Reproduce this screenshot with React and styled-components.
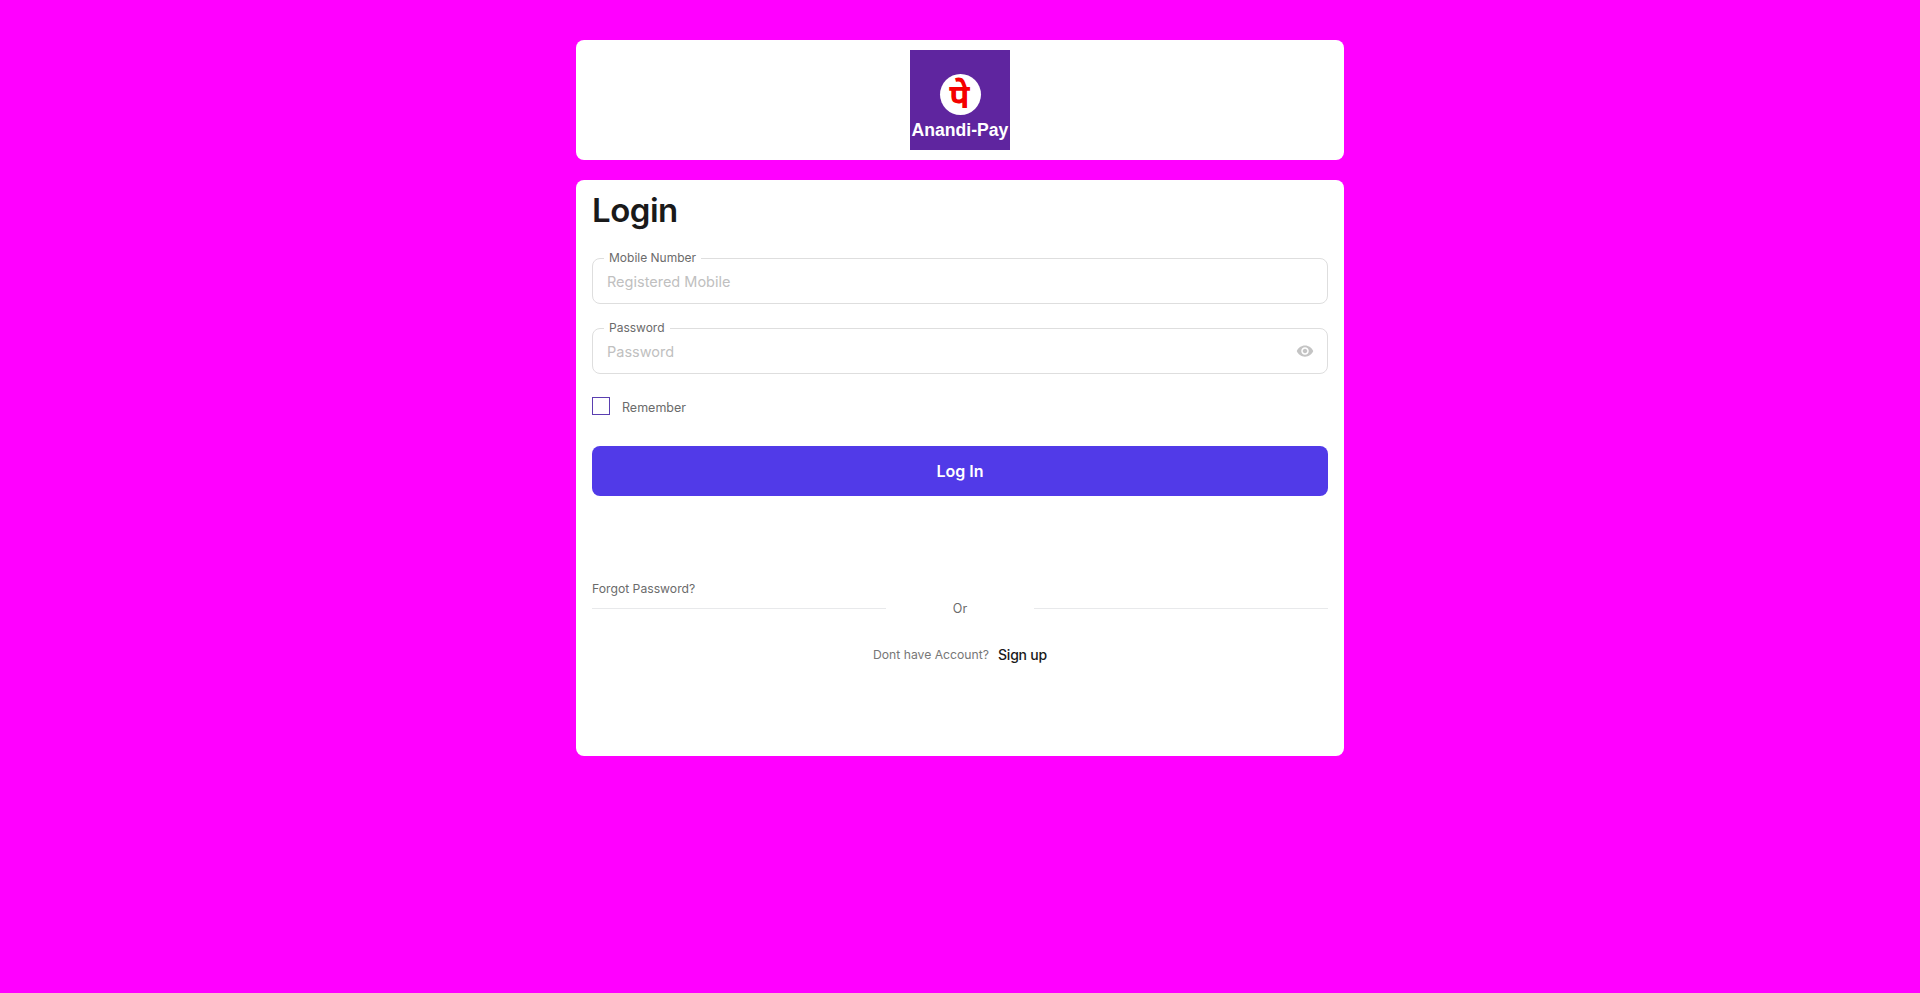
import React, { useState } from 'react'
import styled, { createGlobalStyle } from 'styled-components';
import { MdVisibility } from 'react-icons/md';

const GlobalStyle = createGlobalStyle`
html, body {
    margin: 0;
    padding: 0;
    background: #ff00ff;
    font-family: Inter, "Open Sans", sans-serif;
}
* {
    box-sizing: border-box;
}
`;

const Page = styled('div')`
    min-height: 993px;
    padding-top: 40px;
    display: flex;
    flex-direction: column;
    align-items: center;
    gap: 20px;
`;

const Card = styled('div')`
    width: 768px;
    background: #fff;
    border-radius: 8px;
`;

const LogoCard = styled(Card)`
    height: 120px;
    display: flex;
    align-items: center;
    justify-content: center;
`;

const Logo = styled('div')`
    width: 100px;
    height: 100px;
    background: #5f259f;
    display: flex;
    flex-direction: column;
    align-items: center;
    padding-top: 24px;
`;

const LogoMark = styled('div')`
    width: 41px;
    height: 41px;
    border-radius: 50%;
    background: #fff;
    color: #f40000;
    font-family: "Noto Sans", "Noto Sans Devanagari", "Lohit Devanagari", sans-serif;
    font-size: 33px;
    font-weight: 700;
    line-height: 43px;
    text-align: center;
    padding-right: 1px;
`;

const LogoName = styled('div')`
    margin-top: 5px;
    font-family: "Liberation Sans", Arial, sans-serif;
    font-weight: 700;
    font-size: 17.6px;
    line-height: 20px;
    color: #fff;
    white-space: nowrap;
`;

const FormCard = styled(Card)`
    height: 576px;
    padding: 8px 16px 0;
`;

const Title = styled('h1')`
    margin: 0 0 19px;
    font-size: 33px;
    line-height: 44px;
    font-weight: 600;
    letter-spacing: -0.5px;
    color: #1a1a1a;
`;

const Field = styled('fieldset')`
    margin: 0 0 17px;
    padding: 0 12px 6px 14px;
    min-width: 0;
    height: 53px;
    display: flex;
    align-items: center;
    border: 1px solid #dedede;
    border-radius: 8px;

    legend {
        margin-left: -3px;
        padding: 0 5px;
        font-size: 12px;
        line-height: 14px;
        color: #6b6b6b;
    }
`;

const Input = styled('input')`
    flex: 1;
    min-width: 0;
    height: 36px;
    padding: 0;
    border: none;
    outline: none;
    background: transparent;
    font-family: inherit;
    font-size: 14.5px;
    color: #333;

    &::placeholder {
        color: #c0c0c0;
        opacity: 1;
    }
`;

const EyeButton = styled('button')`
    display: flex;
    padding: 0;
    margin-right: 1px;
    border: none;
    background: transparent;
    color: #c4c4c4;
    cursor: pointer;
`;

const RememberRow = styled('label')`
    margin-top: 23px;
    height: 18px;
    display: flex;
    align-items: center;
    gap: 12px;
    font-size: 12.5px;
    color: #6b6b6b;
    cursor: pointer;

    span {
        padding-top: 2px;
    }
`;

const Check = styled('input')`
    appearance: none;
    margin: 0;
    width: 18px;
    height: 18px;
    border: 1px solid #5a3fb0;
    background: ${props => props.checked ? '#5a3fb0' : 'transparent'};
`;

const LoginButton = styled('button')`
    display: block;
    width: 100%;
    height: 50px;
    margin-top: 31px;
    border: none;
    border-radius: 8px;
    background: #513ae8;
    color: #fff;
    font-family: inherit;
    font-size: 16px;
    font-weight: 600;
    cursor: pointer;
`;

const Forgot = styled('a')`
    display: block;
    margin-top: 85px;
    font-size: 12.2px;
    line-height: 16px;
    color: #6b6b6b;
`;

const Divider = styled('div')`
    margin-top: 3px;
    height: 16px;
    display: flex;
    align-items: center;
    font-size: 12.5px;
    color: #6b6b6b;

    &::before, &::after {
        content: '';
        flex: 1;
        height: 1px;
        background: #e8e9eb;
    }

    span {
        width: 148px;
        text-align: center;
    }
`;

const SignupRow = styled('div')`
    margin-top: 28px;
    height: 20px;
    display: flex;
    align-items: center;
    justify-content: center;
    gap: 9px;
    font-size: 12.2px;
    color: #777;
`;

const SignupLink = styled('a')`
    font-size: 14px;
    font-weight: 500;
    letter-spacing: -0.2px;
    color: #1a1a1a;
    cursor: pointer;
`;

export default function App() {
    const [remember, setRemember] = useState(false);
    const [showPassword, setShowPassword] = useState(false);

    return (
        <Page>
            <GlobalStyle />
            <LogoCard>
                <Logo>
                    <LogoMark>पे</LogoMark>
                    <LogoName>Anandi-Pay</LogoName>
                </Logo>
            </LogoCard>
            <FormCard>
                <Title>Login</Title>
                <Field>
                    <legend>Mobile Number</legend>
                    <Input placeholder="Registered Mobile" />
                </Field>
                <Field>
                    <legend>Password</legend>
                    <Input type={showPassword ? 'text' : 'password'} placeholder="Password" />
                    <EyeButton type="button" onClick={() => setShowPassword(!showPassword)}>
                        <MdVisibility size={18} />
                    </EyeButton>
                </Field>
                <RememberRow>
                    <Check type="checkbox" checked={remember} onChange={(e) => setRemember(e.target.checked)} />
                    <span>Remember</span>
                </RememberRow>
                <LoginButton>Log In</LoginButton>
                <Forgot>Forgot Password?</Forgot>
                <Divider><span>Or</span></Divider>
                <SignupRow>
                    Dont have Account?
                    <SignupLink>Sign up</SignupLink>
                </SignupRow>
            </FormCard>
        </Page>
    )
}
